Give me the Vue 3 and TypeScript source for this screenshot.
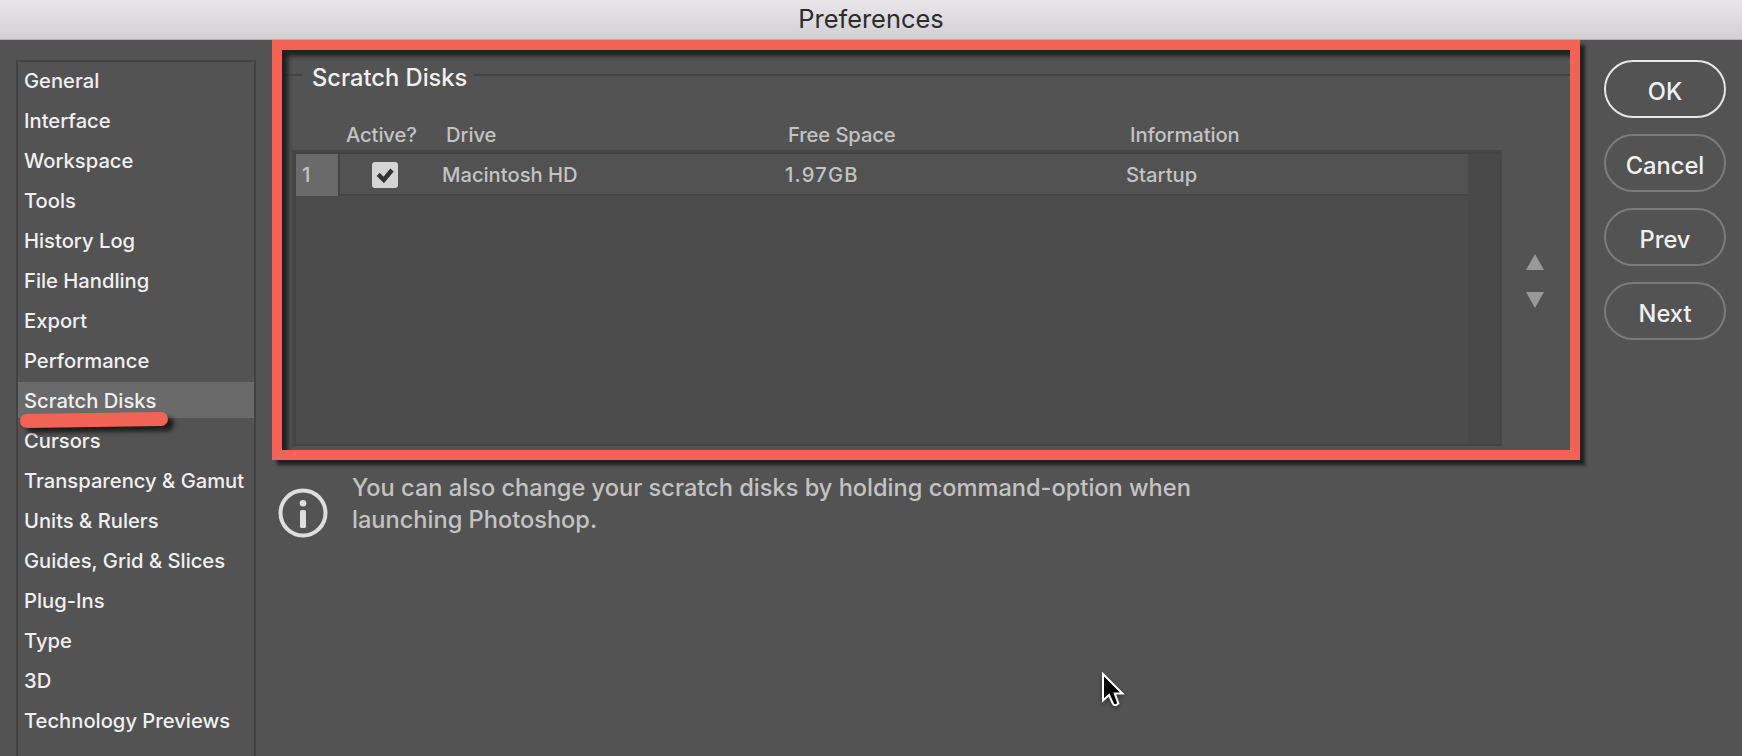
<script setup lang="ts">
import { ref } from 'vue'

interface Disk {
  id: number
  active: boolean
  drive: string
  freeSpace: string
  information: string
}

const sections = [
  'General',
  'Interface',
  'Workspace',
  'Tools',
  'History Log',
  'File Handling',
  'Export',
  'Performance',
  'Scratch Disks',
  'Cursors',
  'Transparency & Gamut',
  'Units & Rulers',
  'Guides, Grid & Slices',
  'Plug-Ins',
  'Type',
  '3D',
  'Technology Previews',
]
const selected = ref('Scratch Disks')

const disks = ref<Disk[]>([
  { id: 1, active: true, drive: 'Macintosh HD', freeSpace: '1.97GB', information: 'Startup' },
])

const actions = ['OK', 'Cancel', 'Prev', 'Next']
</script>

<template>
  <div class="window">
    <header class="titlebar">Preferences</header>

    <div class="body">
      <nav class="sidebar">
        <div
          v-for="section in sections"
          :key="section"
          class="item"
          :class="{ selected: section === selected }"
          @click="selected = section"
        >
          {{ section }}
          <svg v-if="section === 'Scratch Disks'" class="underline" width="160" height="30" viewBox="0 0 160 30">
            <path d="M9 13 L143 11" />
          </svg>
        </div>
      </nav>

      <main class="content">
        <section class="group">
          <div class="legend">
            <span class="rule rule-start"></span>
            <h2>Scratch Disks</h2>
            <span class="rule"></span>
          </div>

          <div class="group-body">
            <div class="disks">
              <div class="columns head">
                <span></span>
                <span>Active?</span>
                <span>Drive</span>
                <span>Free Space</span>
                <span>Information</span>
              </div>
              <div class="table">
                <div class="rows">
                  <div v-for="disk in disks" :key="disk.id" class="row">
                    <span class="index">{{ disk.id }}</span>
                    <div class="columns cells">
                      <span class="check" @click="disk.active = !disk.active">
                        <svg v-if="disk.active" width="26" height="26" viewBox="0 0 26 26">
                          <path d="M6.2 12.4 L11.8 18 L20 8" />
                        </svg>
                      </span>
                      <span>{{ disk.drive }}</span>
                      <span class="free">{{ disk.freeSpace }}</span>
                      <span>{{ disk.information }}</span>
                    </div>
                  </div>
                </div>
                <div class="scrollbar"></div>
              </div>
            </div>

            <div class="movers">
              <svg width="18" height="16" viewBox="0 0 18 16"><path d="M9 0 L18 16 H0 Z" /></svg>
              <svg width="18" height="16" viewBox="0 0 18 16"><path d="M0 0 H18 L9 16 Z" /></svg>
            </div>
          </div>
          <div class="highlight"></div>
        </section>

        <div class="hint">
          <svg width="50" height="50" viewBox="0 0 50 50">
            <circle class="ring" cx="25" cy="25" r="22.5" />
            <circle cx="25" cy="15.2" r="3.3" />
            <rect x="22" y="22" width="6" height="18" rx="1.6" />
          </svg>
          <p>You can also change your scratch disks by holding command-option when<br />launching Photoshop.</p>
        </div>
      </main>

      <aside class="actions">
        <button v-for="(action, i) in actions" :key="action" :class="{ primary: i === 0 }">{{ action }}</button>
      </aside>
    </div>

    <svg class="cursor" width="24" height="38" viewBox="0 0 24 38">
      <path d="M2 2 V28.5 L8 23 L12 32 Q14 34.5 17.4 31.6 L13.8 21.6 H21.4 Z" />
    </svg>
  </div>
</template>

<style>
body {
  margin: 0;
  overflow: hidden;
}
</style>

<style scoped>
.window {
  position: relative;
  display: flex;
  flex-direction: column;
  width: 1742px;
  height: 756px;
  overflow: hidden;
  background: #535353;
  color: #f0f0f0;
  font-family: Inter, 'Liberation Sans', sans-serif;
  font-size: 20.2px;
  font-weight: 500;
}
.titlebar {
  flex: none;
  box-sizing: border-box;
  height: 40px;
  border-bottom: 1px solid #b1afb2;
  background: linear-gradient(#e8e6e9, #d2d0d3);
  color: #2c2c2e;
  font-size: 25.4px;
  font-weight: 400;
  line-height: 38px;
  text-align: center;
}
.body {
  flex: 1;
  display: flex;
  min-height: 0;
}

/* section list */
.sidebar {
  flex: none;
  box-sizing: border-box;
  display: flex;
  flex-direction: column;
  gap: 4px;
  width: 240px;
  margin: 20px 16px 0;
  border: 2px solid #434343;
  border-bottom: 0;
}
.item {
  position: relative;
  box-sizing: border-box;
  flex: none;
  height: 36px;
  padding: 1px 0 0 6px;
  line-height: 35px;
  white-space: nowrap;
}
.item.selected {
  background: #6a6a6a;
}
.underline {
  position: absolute;
  z-index: 1;
  left: 0;
  top: 26px;
  overflow: visible;
  filter: drop-shadow(6px 5px 2px #1d1d1d);
}
.underline path {
  fill: none;
  stroke: #f26355;
  stroke-width: 14;
  stroke-linecap: round;
}

/* scratch disks group */
.content {
  flex: none;
  width: 1308px;
}
.group {
  position: relative;
  box-sizing: border-box;
  height: 420px;
  padding: 10px;
}
.highlight {
  position: absolute;
  inset: 0;
  border: 10px solid #f26355;
  box-shadow: 5px 5px 3px #212121, inset 6px 6px 4px #212121;
  pointer-events: none;
}
.legend {
  display: flex;
  align-items: center;
  height: 50px;
}
.legend h2 {
  margin: 6px 6px 0 9px;
  font-size: 23.7px;
  font-weight: 500;
  line-height: 30px;
}
.rule {
  flex: 1;
  height: 2px;
  background: #444;
}
.rule-start {
  flex: 0 0 21px;
}
.group-body {
  display: flex;
  padding-left: 10px;
}
.disks {
  width: 1210px;
  color: #c3c3c3;
}
.columns {
  display: grid;
  grid-template-columns: 54px 100px 342px 342px 1fr;
}
.head {
  height: 50px;
  line-height: 70px;
  letter-spacing: -0.1px;
}
.table {
  box-sizing: border-box;
  display: flex;
  height: 296px;
  border: 2px solid #474747;
  border-bottom-color: #434343;
  background: #4c4c4c;
  box-shadow: inset 2px 2px 0 #434343;
}
.rows {
  flex: 1;
  padding: 2px 0 0 2px;
}
.row {
  display: flex;
  height: 42px;
  line-height: 41px;
}
.index {
  width: 36px;
  padding-left: 6px;
  background: #6a6a6a;
}
.cells {
  box-sizing: border-box;
  flex: 1;
  grid-template-columns: 102px 343px 341px 1fr;
  border: solid #444;
  border-width: 0 0 2px 2px;
  background: #525252;
}
.free {
  letter-spacing: 1.2px;
}
.check {
  width: 26px;
  height: 26px;
  margin: 8px 0 0 32px;
  border-radius: 3px;
  background: #d4d4d4;
}
.check svg {
  display: block;
}
.check path {
  fill: none;
  stroke: #333;
  stroke-width: 4.4;
}
.scrollbar {
  width: 32px;
  margin-top: 2px;
  background: #494949;
}
.movers {
  display: flex;
  flex-direction: column;
  gap: 22px;
  padding: 154px 0 0 24px;
  fill: #999;
}
.movers svg {
  display: block;
}

.hint {
  display: flex;
  gap: 24px;
  margin: 11px 0 0 6px;
  color: #c3c3c3;
  font-size: 23.6px;
  line-height: 32px;
}
.hint svg {
  flex: none;
  margin-top: 17px;
  fill: #dedede;
}
.hint .ring {
  fill: none;
  stroke: #dedede;
  stroke-width: 4;
}
.hint p {
  margin: 0;
  padding-top: 1px;
  white-space: nowrap;
}

.actions {
  display: flex;
  flex-direction: column;
  gap: 16px;
  padding: 20px 0 0 24px;
}
.actions button {
  box-sizing: border-box;
  width: 122px;
  height: 58px;
  padding: 4px 0 0;
  border: 2px solid #7b7b7b;
  border-radius: 29px;
  background: none;
  color: #f0f0f0;
  font: inherit;
  font-size: 23.7px;
}
.actions button.primary {
  border-color: #e6e6e6;
}

.cursor {
  position: absolute;
  left: 1101px;
  top: 672px;
  fill: #000;
  stroke: #fff;
  stroke-width: 2;
  filter: drop-shadow(0 2px 2px rgba(0, 0, 0, 0.4));
}
</style>
